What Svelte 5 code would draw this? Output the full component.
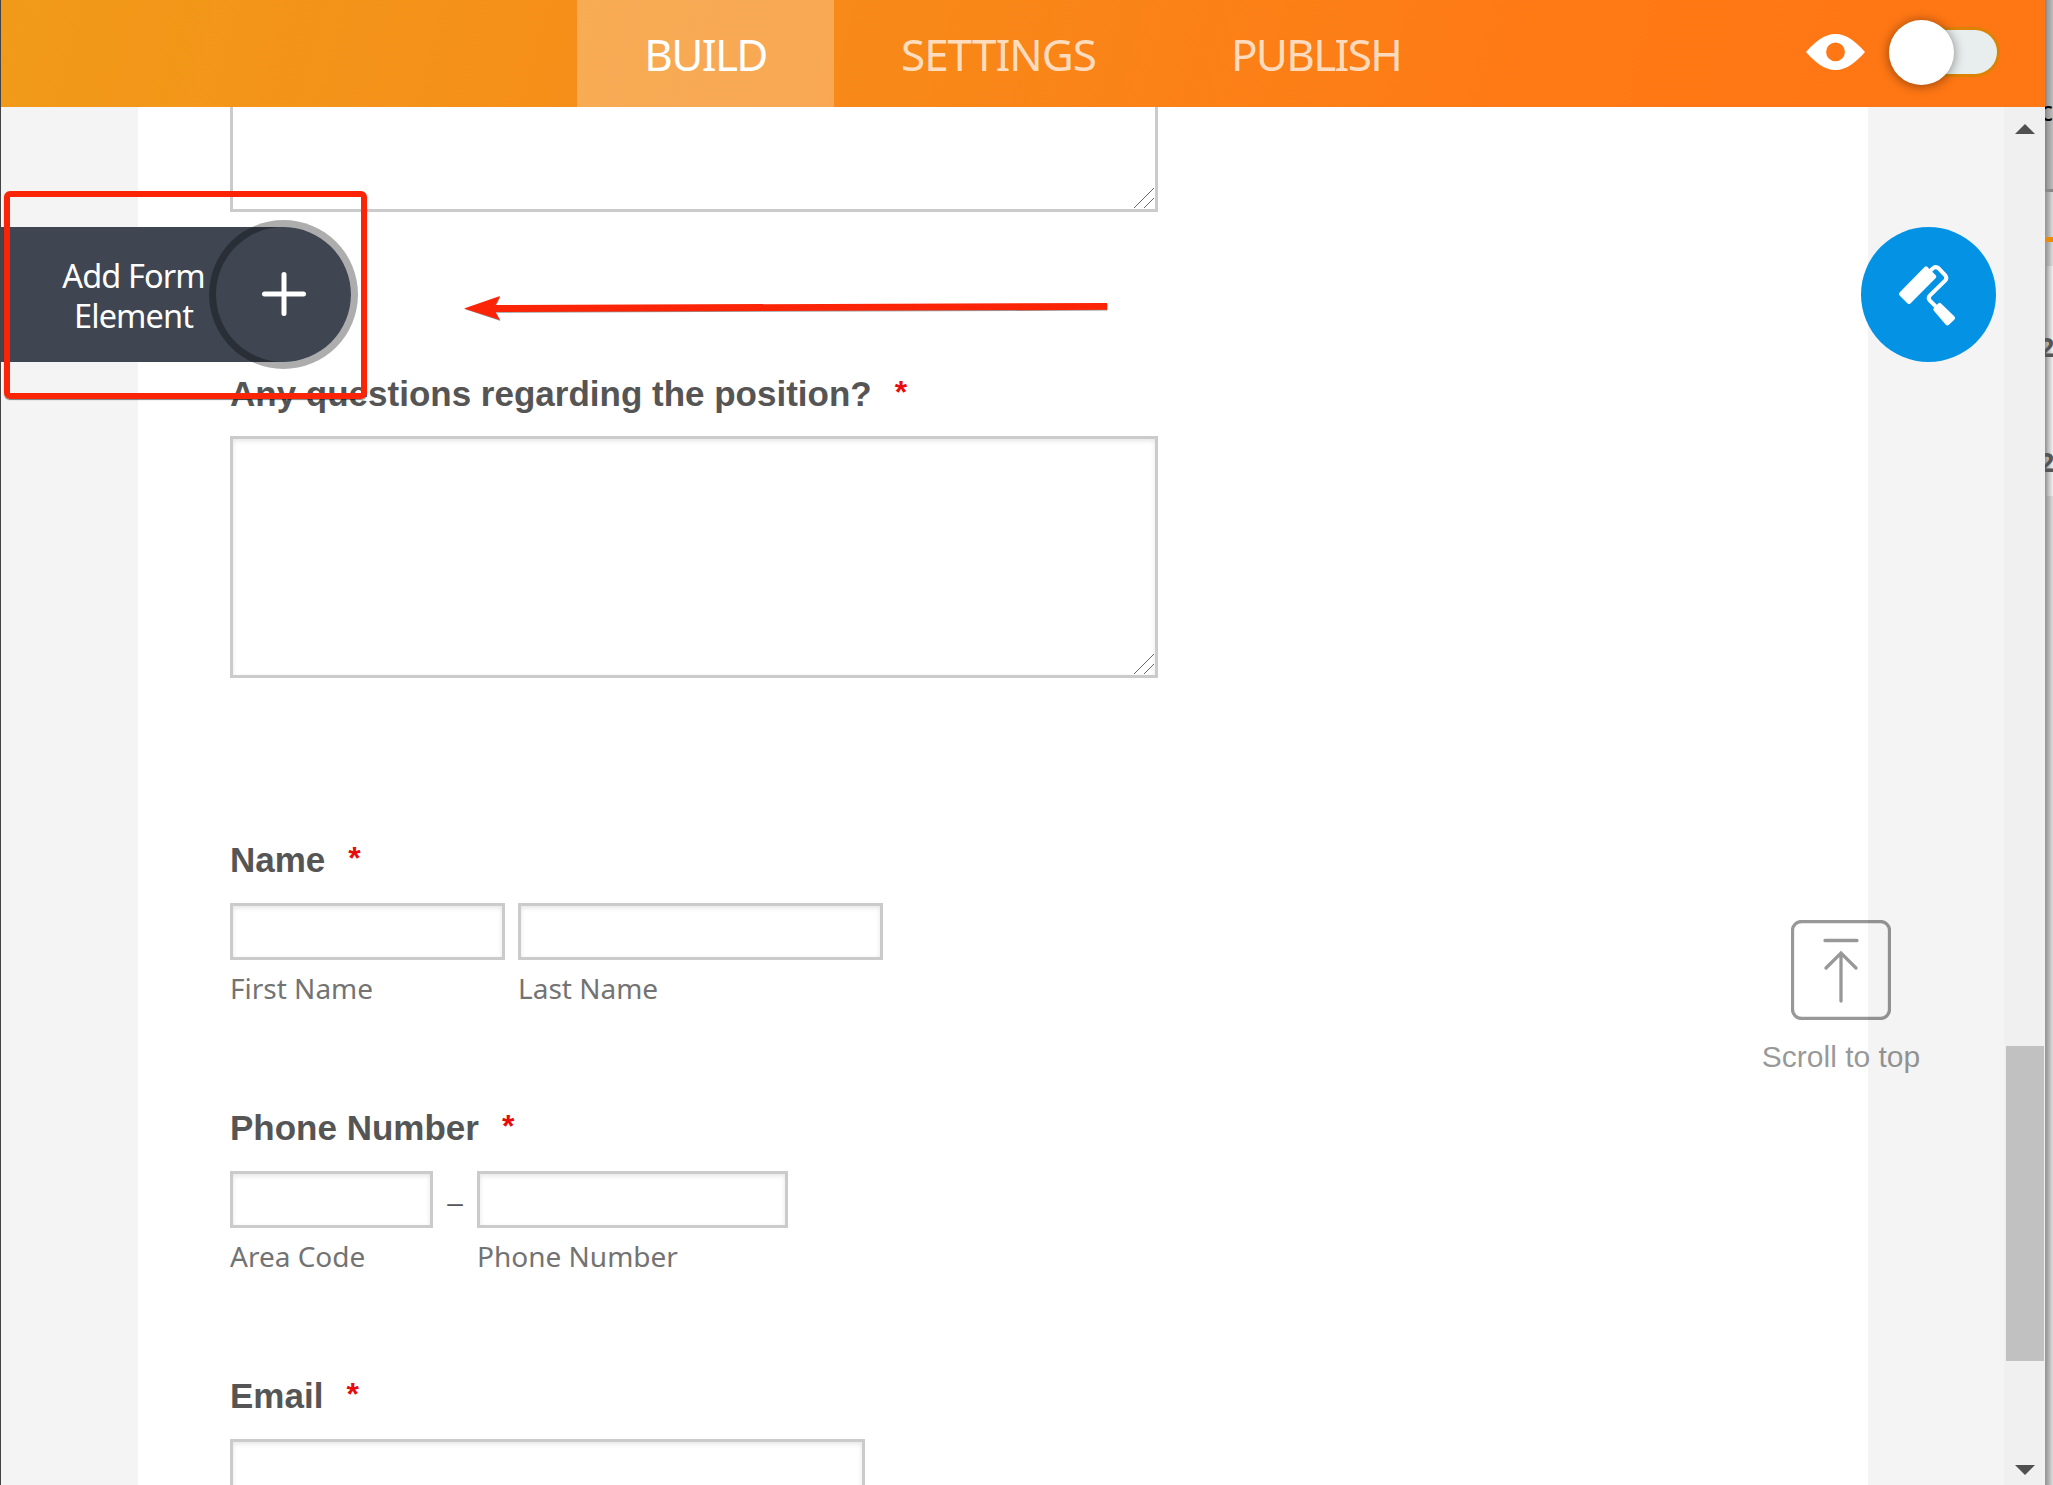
<script lang="ts">
    type Part = { width: number; label?: string };
    type Field = { title: string; kind: string; parts: Part[]; dash?: boolean };

    const tabs = ['Build', 'Settings', 'Publish'];
    let active = $state('Build');

    const fields: Field[] = [
        { title: 'Any questions regarding the position?', kind: 'area', parts: [{ width: 928 }] },
        {
            title: 'Name',
            kind: 'text',
            parts: [
                { width: 275, label: 'First Name' },
                { width: 365, label: 'Last Name' }
            ]
        },
        {
            title: 'Phone Number',
            kind: 'text',
            dash: true,
            parts: [
                { width: 203, label: 'Area Code' },
                { width: 311, label: 'Phone Number' }
            ]
        },
        { title: 'Email', kind: 'text', parts: [{ width: 635 }] }
    ];
</script>

{#snippet grip()}
    <svg class="grip" viewBox="0 0 20 20">
        <path d="M0 20L20 0M10 20l10-10" fill="none" stroke="#666" stroke-width="1" />
    </svg>
{/snippet}

<div class="app">
    <div class="window">
        <header>
            <nav>
                {#each tabs as tab}
                    <button class="tab {tab.toLowerCase()}" class:active={tab === active} onclick={() => (active = tab)}>{tab}</button>
                {/each}
            </nav>
            <div class="preview">
                <svg class="eye" viewBox="0 0 59 36">
                    <path fill="#fff" fill-rule="evenodd" d="M0 18C9 8 18 0 29.500 0S50 8 59 18C50 28 41 36 29.500 36S9 28 0 18zM29.500 8.500a9.400 9.400 0 1 0 0 18.800a9.400 9.400 0 1 0 0-18.800z" />
                </svg>
                <div class="toggle"><span class="knob"></span></div>
            </div>
        </header>

        <div class="body">
            <main>
                <div class="box area first">{@render grip()}</div>
                {#each fields as field}
                    <section class={field.kind}>
                        <h3>{field.title}<span class="required">*</span></h3>
                        <div class="row">
                            {#each field.parts as part, i}
                                {#if field.dash && i > 0}
                                    <span class="dash">–</span>
                                {/if}
                                <div class="part" style="width: {part.width}px">
                                    <div class="box {field.kind}">
                                        {#if field.kind === 'area'}{@render grip()}{/if}
                                    </div>
                                    {#if part.label}
                                        <span class="sub-label">{part.label}</span>
                                    {/if}
                                </div>
                            {/each}
                        </div>
                    </section>
                {/each}
            </main>
            <div class="scrollbar">
                <svg class="up" viewBox="0 0 20 10"><path d="M0 10L10 0l10 10z" fill="#505050" /></svg>
                <div class="thumb"></div>
                <svg class="down" viewBox="0 0 20 10"><path d="M0 0h20L10 10z" fill="#505050" /></svg>
            </div>
        </div>

        <div class="add-element">
            <span class="add-text">Add Form Element</span>
            <span class="add-circle">
                <svg viewBox="0 0 44 44"><path d="M22 2.500v39M2.500 22h39" stroke="#fff" stroke-width="5" stroke-linecap="round" /></svg>
            </span>
        </div>

        <div class="designer">
            <svg viewBox="123 81 405 405">
                <path fill="#fff" stroke="#fff" stroke-width="12" stroke-linejoin="round" d="M243 282L267 306L343 230L318 205z" />
                <path fill="none" stroke="#fff" stroke-width="12" stroke-linejoin="round" d="M331 212L340 204Q348 198 356 205L376 226Q382 234 376 241L330 286Q323 293 329 301L350 322" />
                <path fill="#fff" stroke="#fff" stroke-width="14" stroke-linejoin="round" d="M347 328L359 316L398 354L382 369z" />
            </svg>
        </div>

        <div class="to-top">
            <svg viewBox="0 0 100 100">
                <rect x="1.500" y="1.500" width="97" height="97" rx="9" />
                <path d="M34 20.500h32M50 33v48M35 48l15-15 15 15" />
            </svg>
            <span>Scroll to top</span>
        </div>

        <div class="highlight"></div>
        <svg class="arrow" viewBox="0 0 650 30">
            <path fill="#999" d="M1 14.300L36.500 2L32 10.700L643.500 9V15.600L32 17.800L36.500 26z" />
            <path fill="#fb2407" d="M0 13.500L36 1L31.500 10L643 8V14.800L31.500 17L36 25z" />
        </svg>
    </div>

    <!-- sliver of the page behind the window -->
    <aside>
        <div class="behind head"><span>c</span></div>
        <div class="behind line"></div>
        <div class="behind orange"></div>
        <div class="behind gap"></div>
        <div class="behind cell"><span>2</span></div>
        <div class="behind cell"><span>2</span></div>
        <div class="behind rest"></div>
    </aside>
</div>

<style>
    :global(body) {
        overflow: hidden;
    }
    .app {
        display: flex;
        width: 2053px;
        height: 1485px;
        overflow: hidden;
        font-family: "Liberation Sans", Arial, sans-serif;
    }
    .app * {
        box-sizing: border-box;
    }
    .window {
        position: relative;
        display: flex;
        flex-direction: column;
        width: 2045px;
        background: #f4f4f4;
        border-left: 1px solid #444;
    }
    header {
        display: flex;
        justify-content: space-between;
        flex: none;
        height: 107px;
        padding-left: 576px;
        padding-right: 45px;
        background: linear-gradient(105deg, #f19a19 0%, #f88818 45%, #ff7915 75%, #ff7614 100%);
    }
    nav {
        display: flex;
    }
    .tab {
        display: flex;
        align-items: center;
        justify-content: center;
        border: 0;
        padding: 1px 0 0;
        background: none;
        color: rgba(255, 255, 255, 0.74);
        font-family: "Noto Sans", "Open Sans", sans-serif;
        font-size: 44px;
        letter-spacing: -1.7px;
        text-transform: uppercase;
    }
    .tab.active {
        background: rgba(255, 255, 255, 0.26);
        color: #fff;
    }
    .build {
        width: 257px;
    }
    .settings {
        width: 329px;
        letter-spacing: -1px;
    }
    .publish {
        width: 306px;
    }
    .preview {
        display: flex;
        align-items: center;
        gap: 24px;
        padding-bottom: 3px;
    }
    .eye {
        width: 59px;
        height: 36px;
    }
    .toggle {
        display: flex;
        align-items: center;
        width: 111px;
        height: 50px;
        border: 3px solid #de8205;
        border-left: 0;
        border-radius: 25px;
        background: #e8eeed;
    }
    .knob {
        flex: none;
        width: 65px;
        height: 65px;
        border-radius: 50%;
        background: #fff;
        box-shadow: 0 1px 12px rgba(0, 0, 0, 0.45);
    }
    .body {
        display: flex;
        justify-content: space-between;
        height: 1378px;
        padding-left: 137px;
    }
    main {
        width: 1730px;
        padding-left: 92px;
        background: #fff;
        overflow: hidden;
    }
    .box {
        display: flex;
        align-items: flex-end;
        justify-content: flex-end;
        border: 3px solid #cbcbcb;
        background: #fff;
        box-shadow: inset 0 2px 5px rgba(0, 0, 0, 0.1);
    }
    .box.text {
        height: 57px;
    }
    .box.area {
        height: 242px;
    }
    .box.first {
        width: 928px;
        height: 105px;
        border-top: 0;
        box-shadow: none;
    }
    .grip {
        width: 20px;
        height: 20px;
        margin: 0 1px 1px 0;
    }
    section {
        height: 268px;
    }
    section.area {
        height: 466px;
        margin-top: 161px;
    }
    h3 {
        display: flex;
        margin: 0;
        height: 64px;
        line-height: 42px;
        color: #555;
        font-size: 35px;
        font-weight: bold;
    }
    .area h3 {
        height: 63px;
    }
    .required {
        margin-left: 23px;
        color: #e80c0c;
        font-size: 32px;
        line-height: 38px;
    }
    .row {
        display: flex;
        gap: 13px;
    }
    .dash {
        width: 18px;
        height: 57px;
        line-height: 64px;
        text-align: center;
        color: #555;
        font-size: 28px;
    }
    .part {
        display: flex;
        flex-direction: column;
    }
    .sub-label {
        margin-top: 7px;
        line-height: 42px;
        color: #737373;
        font-family: "Noto Sans", "Open Sans", sans-serif;
        font-size: 28px;
    }
    .scrollbar {
        display: flex;
        flex-direction: column;
        align-items: center;
        width: 41px;
        padding: 17px 0 10px;
        background: #f0f0f0;
    }
    .scrollbar svg {
        width: 20px;
        height: 10px;
    }
    .thumb {
        width: 38px;
        height: 315px;
        margin-top: 912px;
        margin-bottom: auto;
        background: #c1c1c1;
    }
    .add-element {
        position: absolute;
        left: 0;
        top: 227px;
        display: flex;
        align-items: center;
        justify-content: flex-end;
        width: 350px;
        height: 135px;
        border-radius: 0 68px 68px 0;
        background: #3f4651;
    }
    .add-text {
        width: 165px;
        padding-top: 2px;
        color: #fff;
        font-family: "Noto Sans", "Open Sans", sans-serif;
        font-size: 32.5px;
        letter-spacing: -0.9px;
        line-height: 40px;
        text-align: center;
    }
    .add-circle {
        display: flex;
        align-items: center;
        justify-content: center;
        width: 135px;
        height: 135px;
        border-radius: 50%;
        box-shadow: 0 0 0 7px rgba(0, 0, 0, 0.32);
    }
    .add-circle svg {
        width: 44px;
        height: 44px;
        margin-bottom: 1px;
    }
    .designer {
        position: absolute;
        left: 1860px;
        top: 227px;
        width: 135px;
        height: 135px;
        border-radius: 50%;
        background: #0493e4;
    }
    .designer svg {
        display: block;
    }
    .to-top {
        position: absolute;
        left: 1750px;
        top: 920px;
        display: flex;
        flex-direction: column;
        align-items: center;
        width: 180px;
        opacity: 0.4;
        color: #000;
        font-size: 30px;
        line-height: 34px;
    }
    .to-top svg {
        width: 100px;
        height: 100px;
        margin-bottom: 20px;
        fill: none;
        stroke: #000;
        stroke-width: 3.3;
        stroke-linecap: round;
    }
    .highlight {
        position: absolute;
        left: 3px;
        top: 191px;
        width: 363px;
        height: 208px;
        border: 6px solid #fb2407;
        border-radius: 6px;
        box-shadow: 0 1px 1px rgba(0, 0, 0, 0.5);
    }
    .arrow {
        position: absolute;
        left: 463px;
        top: 295px;
        width: 650px;
        height: 30px;
    }
    aside {
        display: flex;
        flex-direction: column;
        width: 8px;
        background: #ddd;
    }
    .behind {
        flex: none;
        width: 8px;
        overflow: hidden;
        background: linear-gradient(90deg, #999 0 1px, #aaa 3px, #ddd 8px);
    }
    .behind span {
        display: block;
        font-family: "Noto Sans", sans-serif;
        font-size: 27px;
        line-height: 30px;
    }
    .head {
        height: 189px;
        padding-top: 96px;
        background: linear-gradient(90deg, #888 0 1px, #999 2px, #bebebe 8px);
    }
    .head span {
        margin-left: -5px;
    }
    .line {
        height: 3px;
        background: #888;
    }
    .gap {
        height: 24px;
    }
    .orange {
        height: 50px;
        border-bottom: 5px solid #ea8b08;
    }
    .cell {
        height: 115px;
        padding-top: 66px;
        background: linear-gradient(90deg, #999 0 1px, #bbb 3px, #f0f0f0 8px);
    }
    .cell span {
        margin-left: -6px;
        color: #555;
        font-weight: bold;
    }
    .rest {
        height: 989px;
    }
</style>
